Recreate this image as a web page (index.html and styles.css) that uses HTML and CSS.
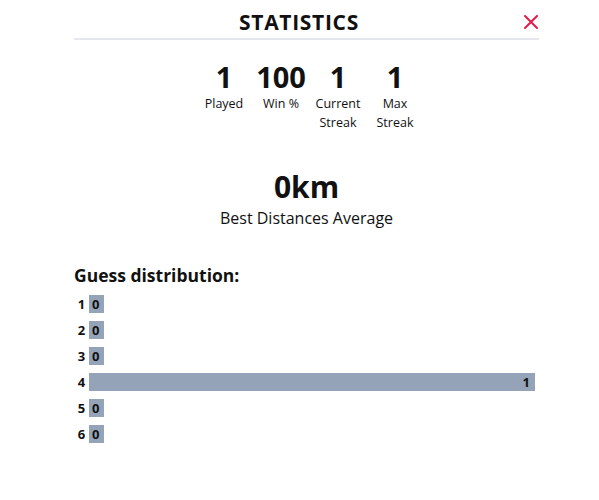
FILE: index.html
```html
<!DOCTYPE html>
<html lang="en">
<head>
    <meta charset="UTF-8">
    <meta name="viewport" content="width=device-width, initial-scale=1.0">
    <title>Statistics</title>
    <link rel="stylesheet" href="styles.css">
</head>
<body>
    <div class="modal">
        <!-- header -->
        <div class="modal-header">
            <h1 class="modal-title">STATISTICS</h1>
            <button class="close-btn" aria-label="Close">
                <svg width="14" height="14" viewBox="0 0 14 14">
                    <path d="M1 1 L13 13 M13 1 L1 13" stroke="#e11d48" stroke-width="2" stroke-linecap="round" fill="none"/>
                </svg>
            </button>
        </div>

        <!-- stats -->
        <div class="stat-bar">
            <div class="stat-item">
                <div class="stat-value">1</div>
                <div class="stat-label">Played</div>
            </div>
            <div class="stat-item">
                <div class="stat-value">100</div>
                <div class="stat-label">Win %</div>
            </div>
            <div class="stat-item">
                <div class="stat-value">1</div>
                <div class="stat-label">Current Streak</div>
            </div>
            <div class="stat-item">
                <div class="stat-value">1</div>
                <div class="stat-label">Max Streak</div>
            </div>
        </div>

        <div class="distance">
            <div class="distance-value">0km</div>
            <div class="distance-label">Best Distances Average</div>
        </div>

        <!-- guess distribution -->
        <h2 class="dist-title">Guess distribution:</h2>
        <div class="dist-list">
            <div class="dist-row"><span class="dist-num">1</span><div class="dist-track"><div class="dist-bar">0</div></div></div>
            <div class="dist-row"><span class="dist-num">2</span><div class="dist-track"><div class="dist-bar">0</div></div></div>
            <div class="dist-row"><span class="dist-num">3</span><div class="dist-track"><div class="dist-bar">0</div></div></div>
            <div class="dist-row"><span class="dist-num">4</span><div class="dist-track"><div class="dist-bar" style="width: 100%;">1</div></div></div>
            <div class="dist-row"><span class="dist-num">5</span><div class="dist-track"><div class="dist-bar">0</div></div></div>
            <div class="dist-row"><span class="dist-num">6</span><div class="dist-track"><div class="dist-bar">0</div></div></div>
        </div>
    </div>
</body>
</html>
```

FILE: styles.css
```css
body {
    font-family: 'Open Sans', 'Noto Sans', sans-serif;
    background: #ffffff;
    color: #111111;
    margin: 0;
}

.modal {
    width: 465px;
    margin-left: 74px;
    padding-top: 6px;
}

.modal-header {
    display: flex;
    align-items: center;
    border-bottom: 2px solid #e6e6ee;
    height: 32px;
}

.modal-title {
    flex: 1;
    margin: 0;
    text-align: center;
    font-size: 21px;
    font-weight: bold;
    letter-spacing: 0.7px;
}

.close-btn {
    background: none;
    border: none;
    padding: 0;
    margin-right: 1px;
    width: 14px;
    height: 14px;
    cursor: pointer;
}

.close-btn svg {
    display: block;
}

.stat-bar {
    display: flex;
    justify-content: center;
    margin: 21px 0 0 6px;
}

.stat-item {
    display: flex;
    flex-direction: column;
    align-items: center;
    width: 57px;
    text-align: center;
}

.stat-value {
    font-size: 29px;
    font-weight: bold;
    line-height: 32px;
}

.stat-label {
    font-size: 12.5px;
    line-height: 19px;
    margin-top: 1px;
}

.distance {
    text-align: center;
    margin-top: 37px;
}

.distance-value {
    font-size: 30px;
    font-weight: bold;
    line-height: 36px;
}

.distance-label {
    font-size: 16px;
    line-height: 22px;
    margin-top: 2px;
}

.dist-title {
    font-size: 17.5px;
    font-weight: bold;
    margin: 34px 0 8px;
}

.dist-row {
    display: flex;
    align-items: center;
    height: 18px;
    margin-bottom: 8px;
    font-size: 13px;
    font-weight: bold;
}

.dist-num {
    width: 15px;
    text-align: center;
}

.dist-track {
    flex: 1;
    margin-right: 4px;
}

.dist-bar {
    background: #94a3b8;
    height: 18px;
    line-height: 18px;
    min-width: 15px;
    width: 15px;
    box-sizing: border-box;
    padding: 0 5px 0 3px;
    text-align: right;
}
```
